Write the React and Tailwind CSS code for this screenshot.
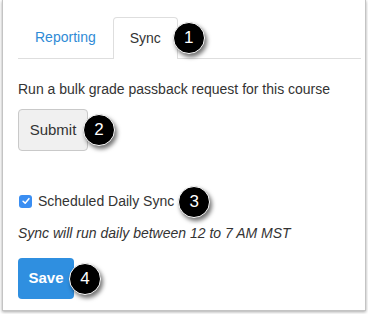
import React from 'react';

function Badge({ n }) {
  return (
    <span className="inline-flex items-center justify-center w-[32px] h-[32px] rounded-full bg-black border border-white text-white text-[17px] shadow-[2px_3px_4px_rgba(0,0,0,0.55)] shrink-0">
      {n}
    </span>
  );
}

export default function App() {
  return (
    <div className="w-[368px] h-[314px] bg-white font-['Liberation_Sans',Arial,sans-serif] text-[14px] text-[#333]">
      <div className="ml-[2px] w-[364px] h-[311px] border-x border-b border-[#c4c4c4] shadow-[0_1px_3px_rgba(0,0,0,0.35)] pl-[15px] pr-[4px] pt-[18px]">
        {/* Tabs */}
        <div className="flex items-end h-[41px] border-b border-[#dedede]">
          <div className="px-[17px] h-[41px] flex items-center text-[#2f8bd6]">Reporting</div>
          <div className="px-[16px] h-[42px] -mb-px flex items-center bg-white border border-b-0 border-[#dedede] rounded-t-[4px] text-[#333]">
            Sync
          </div>
          <div className="self-center -ml-[5px] mt-[-1px]">
            <Badge n="1" />
          </div>
        </div>

        <p className="mt-[20px] leading-[20px]">Run a bulk grade passback request for this course</p>

        {/* Submit */}
        <div className="mt-[10px] flex items-center">
          <button className="h-[42px] w-[70px] rounded-[4px] border border-[#c9c9c9] bg-[#f0f0f0] text-[#333] text-[15px]">
            Submit
          </button>
          <div className="-ml-[5px]">
            <Badge n="2" />
          </div>
        </div>

        {/* Scheduled */}
        <div className="mt-[40px] flex items-center h-[20px]">
          <span className="w-[13px] h-[13px] ml-[1px] rounded-[3px] bg-[#3a8ef2] flex items-center justify-center">
            <svg viewBox="0 0 12 12" className="w-[10px] h-[10px]">
              <path d="M2.5 6.3 L5 8.6 L9.5 3.2" fill="none" stroke="white" strokeWidth="1.8" strokeLinecap="round" strokeLinejoin="round" />
            </svg>
          </span>
          <span className="ml-[6px] text-[14px]">Scheduled Daily Sync</span>
          <div className="ml-[4px] mt-[2px]">
            <Badge n="3" />
          </div>
        </div>
        <p className="mt-[12px] leading-[20px] italic">Sync will run daily between 12 to 7 AM MST</p>

        {/* Save */}
        <div className="mt-[15px] flex items-center">
          <button className="h-[41px] w-[56px] rounded-[4px] bg-[#2f8fe0] text-white font-bold text-[15px]">
            Save
          </button>
          <div className="-ml-[5px]">
            <Badge n="4" />
          </div>
        </div>
      </div>
    </div>
  );
}
